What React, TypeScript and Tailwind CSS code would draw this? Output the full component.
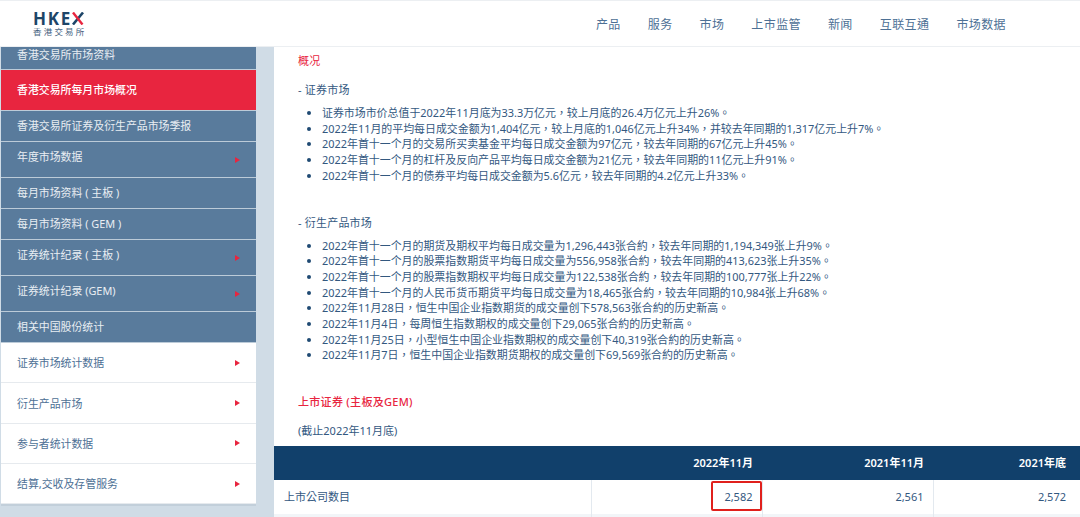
import React from 'react';

const FONT = { fontFamily: '"Noto Sans", "Noto Sans CJK TC", sans-serif' };

const NAV = ['产品', '服务', '市场', '上市监管', '新闻', '互联互通', '市场数据'];

const SIDE_BLUE = [
  { label: '香港交易所市场资料', box: 'h-[23px] pt-0' },
  { label: '香港交易所每月市场概况', box: 'h-[41px] pt-[12px]', active: true },
  { label: '香港交易所证券及衍生产品市场季报', box: 'h-[31px] pt-[7px]' },
  { label: '年度市场数据', box: 'h-[36px] pt-[7px]', arrow: true },
  { label: '每月市场资料 ( 主板 )', box: 'h-[31px] pt-[7px]' },
  { label: '每月市场资料 ( GEM )', box: 'h-[31px] pt-[7px]' },
  { label: '证券统计纪录 ( 主板 )', box: 'h-[36px] pt-[7px]', arrow: true },
  { label: '证券统计纪录 (GEM)', box: 'h-[36px] pt-[7px]', arrow: true },
  { label: '相关中国股份统计', box: 'h-[31px] pt-[7px]' },
];

const SIDE_WHITE = ['证券市场统计数据', '衍生产品市场', '参与者统计数据', '结算,交收及存管服务'];

const SECURITIES = [
  '证券市场市价总值于2022年11月底为33.3万亿元，较上月底的26.4万亿元上升26%。',
  '2022年11月的平均每日成交金额为1,404亿元，较上月底的1,046亿元上升34%，并较去年同期的1,317亿元上升7%。',
  '2022年首十一个月的交易所买卖基金平均每日成交金额为97亿元，较去年同期的67亿元上升45%。',
  '2022年首十一个月的杠杆及反向产品平均每日成交金额为21亿元，较去年同期的11亿元上升91%。',
  '2022年首十一个月的债券平均每日成交金额为5.6亿元，较去年同期的4.2亿元上升33%。',
];

const DERIVATIVES = [
  '2022年首十一个月的期货及期权平均每日成交量为1,296,443张合約，较去年同期的1,194,349张上升9%。',
  '2022年首十一个月的股票指数期货平均每日成交量为556,958张合約，较去年同期的413,623张上升35%。',
  '2022年首十一个月的股票指数期权平均每日成交量为122,538张合約，较去年同期的100,777张上升22%。',
  '2022年首十一个月的人民币货币期货平均每日成交量为18,465张合約，较去年同期的10,984张上升68%。',
  '2022年11月28日，恒生中国企业指数期货的成交量创下578,563张合約的历史新高。',
  '2022年11月4日，每周恒生指数期权的成交量创下29,065张合約的历史新高。',
  '2022年11月25日，小型恒生中国企业指数期权的成交量创下40,319张合約的历史新高。',
  '2022年11月7日，恒生中国企业指数期货期权的成交量创下69,569张合約的历史新高。',
];

const Arrow = () => (
  <svg width="5" height="6" viewBox="0 0 5 6" className="shrink-0">
    <path d="M0 0L5 3L0 6Z" fill="#e8253f" />
  </svg>
);

const Bullets = ({ items }: { items: string[] }) => (
  <ul className="list-disc pl-[24px] text-[10.93px] leading-[15.7px] whitespace-nowrap marker:text-[#1f4a73]">
    {items.map((t) => (
      <li key={t}>{t}</li>
    ))}
  </ul>
);

export default function App() {
  return (
    <div lang="zh-Hant" style={FONT} className="w-[1080px] h-[517px] overflow-hidden bg-[#d0dce6] flex flex-col text-[#33587f]">
      <header className="h-[47px] shrink-0 bg-white border-t border-b border-[#eceff2] flex items-center justify-between pl-[33px] pr-[74px]">
        <div className="flex flex-col">
          <div className="flex items-center h-[13px] text-[#1d4568]">
            <span className="text-[17px] leading-[13px] font-bold tracking-[1.7px]">HKE</span>
            <svg width="12" height="13" viewBox="0 0 12 13">
              <path d="M11 0.5L1 12.5" stroke="#1d4568" strokeWidth="2.6" />
              <path d="M1 0.5L10.5 12.5" stroke="#e8253f" strokeWidth="2.4" />
            </svg>
          </div>
          <span className="mt-[3px] text-[8.5px] leading-[8px] tracking-[2.2px] text-[#47637f]">香港交易所</span>
        </div>
        <nav className="flex gap-[27px] text-[12px] tracking-[0.4px] pt-[2px]">
          {NAV.map((n) => (
            <span key={n} className="text-[#4d7095]">{n}</span>
          ))}
        </nav>
      </header>

      <div className="flex flex-1 min-h-0">
        <aside className="w-[256px] shrink-0 pl-[1px] text-[10.9px]">
          {SIDE_BLUE.map((r) => (
            <div
              key={r.label}
              className={`${r.box} border-b border-[#bccbd8] px-[16px] flex justify-between items-start leading-[15px] ${r.active ? 'bg-[#e8253f] text-white font-medium' : 'bg-[#597b9c] text-[#e9eef3]'}`}
            >
              <span>{r.label}</span>
              {r.arrow && (
                <span className="pt-[8px]">
                  <Arrow />
                </span>
              )}
            </div>
          ))}
          {SIDE_WHITE.map((l) => (
            <div key={l} className="h-[40.3px] bg-white border-b border-[#e6eaee] px-[16px] flex justify-between items-center text-[#4d7095]">
              <span className="pt-[2px]">{l}</span>
              <Arrow />
            </div>
          ))}
          <div className="h-[2px] bg-[#c2cfda]" />
        </aside>

        <main className="ml-[18px] flex-1 min-w-0 bg-white overflow-hidden">
          <div className="pl-[24px] pt-[6px] pb-[8px]">
            <p className="text-[11px] leading-[15px] text-[#e8253f] tracking-[0.3px]">概况</p>
            <p className="mt-[14px] text-[11px] leading-[15px] tracking-[0.2px]">- 证券市场</p>
            <div className="mt-[8px]">
              <Bullets items={SECURITIES} />
            </div>
            <p className="mt-[31px] text-[11px] leading-[15px] tracking-[0.2px]">- 衍生产品市场</p>
            <div className="mt-[8px]">
              <Bullets items={DERIVATIVES} />
            </div>
            <p className="mt-[31px] text-[11px] leading-[15px] text-[#e8253f] font-medium tracking-[0.3px]">上市证券 (主板及GEM)</p>
            <p className="mt-[14px] text-[11px] leading-[15px]">(截止2022年11月底)</p>
          </div>
          <table className="w-full table-fixed border-collapse text-[11px]">
            <colgroup>
              <col className="w-[317px]" />
              <col className="w-[171px]" />
              <col className="w-[171px]" />
              <col />
            </colgroup>
            <thead>
              <tr className="h-[34px] bg-[#11406b] text-white text-right">
                <th />
                <th className="pr-[9px] font-semibold">2022年11月</th>
                <th className="pr-[9px] font-semibold">2021年11月</th>
                <th className="pr-[14px] font-semibold">2021年底</th>
              </tr>
            </thead>
            <tbody>
              <tr className="h-[34px] text-right">
                <td className="border-r border-[#e3e9ef] text-left pl-[10px]">上市公司数目</td>
                <td className="border-r border-[#e3e9ef] pr-[9px]">
                  <span className="relative block">
                    2,582
                    <span className="absolute left-[119px] top-[-8px] w-[51px] h-[30px] border-2 border-[#e0201c] rounded-[2px]" />
                  </span>
                </td>
                <td className="border-r border-[#e3e9ef] pr-[9px]">2,561</td>
                <td className="pr-[14px]">2,572</td>
              </tr>
              <tr className="h-[10px] bg-[#f2f5f8]">
                <td className="border-r border-[#e3e9ef]" />
                <td className="border-r border-[#e3e9ef]" />
                <td className="border-r border-[#e3e9ef]" />
                <td />
              </tr>
            </tbody>
          </table>
        </main>
      </div>
    </div>
  );
}
